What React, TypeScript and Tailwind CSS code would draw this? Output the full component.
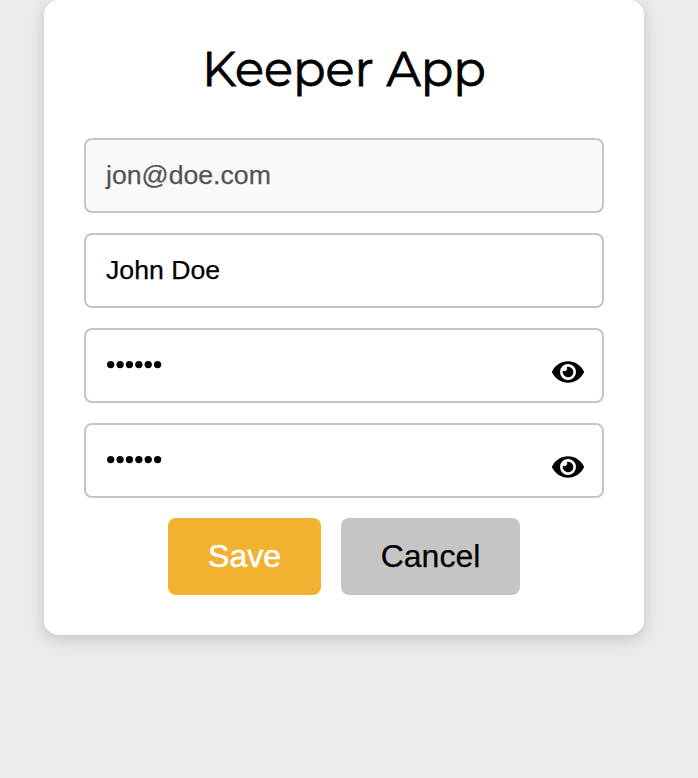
import { FaEye } from "react-icons/fa";

const box =
  "flex h-[75px] w-full items-center rounded-[8px] border-2 border-[#c4c4c4] px-5 pb-[2px] text-[26.67px] leading-[30px] [-webkit-text-stroke:0.25px]";

function Password() {
  return (
    <div className="flex h-[75px] w-full items-center justify-between rounded-[8px] border-2 border-[#c4c4c4] bg-white pr-[18px] pl-5">
      <svg className="mb-[2px] h-[9px] w-14" viewBox="0 0 56 9">
        {[0, 1, 2, 3, 4, 5].map((i) => (
          <circle key={i} cx={4.7 + i * 9.38} cy={4.6} r={3.65} />
        ))}
      </svg>
      <FaEye className="mt-[13px] h-8 w-8" />
    </div>
  );
}

export default function App() {
  return (
    <main className="h-[778px] w-[698px] overflow-hidden bg-[#ebebeb] pl-[44px] font-['Liberation_Sans',Arial,sans-serif] text-black">
      <section className="flex h-[635px] w-[600px] flex-col items-center rounded-[15px] bg-white px-10 shadow-[0_4px_16px_rgba(0,0,0,0.17)]">
        <h1 className="mt-[40px] h-[60px] font-['Montserrat','Inter',sans-serif] text-[48px] leading-[59px] whitespace-nowrap [-webkit-text-stroke:0.8px]">Keeper App</h1>
        <div className="mt-[38px] flex w-full flex-col gap-5">
          <div className={box + " bg-[#f9f9f9] text-[#545454]"}>jon@doe.com</div>
          <div className={box + " bg-white"}>John Doe</div>
          <Password />
          <Password />
        </div>
        <div className="mt-5 flex gap-5">
          <button className="h-[77px] w-[153px] rounded-[8px] bg-[#f2b130] pb-[2px] text-[32px] text-white [-webkit-text-stroke:0.5px]">Save</button>
          <button className="h-[77px] w-[179px] rounded-[8px] bg-[#c5c5c5] pb-[2px] text-[32px] [-webkit-text-stroke:0.25px]">Cancel</button>
        </div>
      </section>
    </main>
  );
}
